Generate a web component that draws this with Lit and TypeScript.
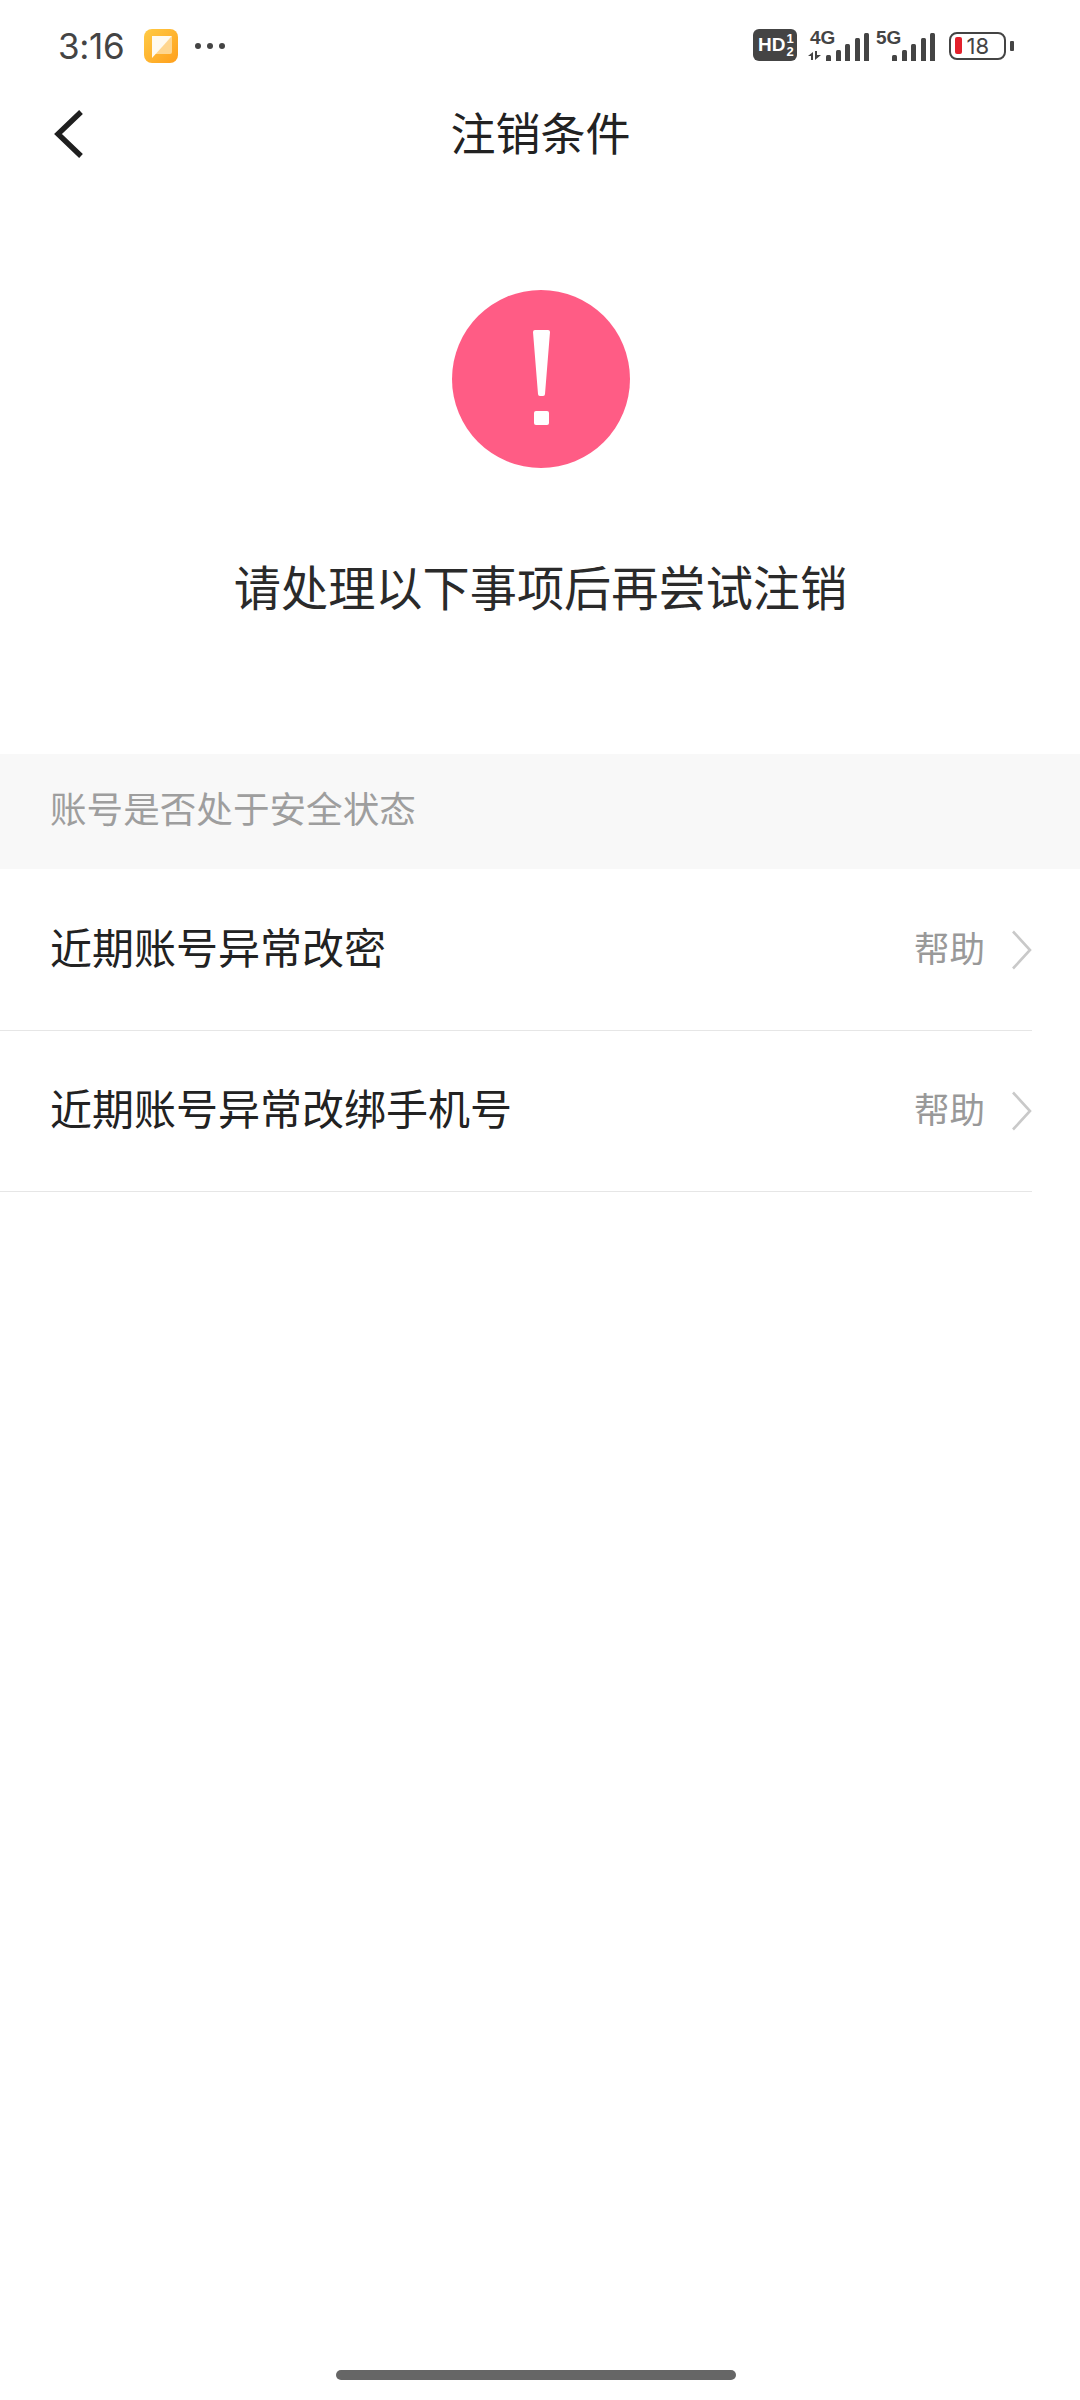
import { LitElement, html, css } from "lit";
import { customElement } from "lit/decorators.js";

const chevron = html`<svg class="chev" width="24" height="42" viewBox="0 0 24 42"><path d="M3 2.5 L20 21 L3 39.5" fill="none" stroke="#c9c9c9" stroke-width="2.6"/></svg>`;

const bars = (heights: number[]) => html`<div class="bars">${heights.map(
  (h) => html`<i class="bar" style="height:${h}px"></i>`
)}</div>`;

@customElement("app-root")
export class AppRoot extends LitElement {
  static styles = css`
    :host {
      display: flex;
      flex-direction: column;
      width: 1080px;
      height: 2400px;
      background: #fff;
      overflow: hidden;
      font-family: "Liberation Sans", "Noto Sans CJK SC", sans-serif;
      color: #222;
    }
    .status {
      height: 84px;
      flex: none;
      display: flex;
      align-items: center;
      padding: 7px 66px 0 58px;
      box-sizing: border-box;
      color: #444;
    }
    .time {
      font-family: Inter, "Noto Sans", sans-serif;
      font-size: 35px;
      line-height: 40px;
      width: 86px;
      letter-spacing: -0.3px;
    }
    .app {
      width: 34px;
      height: 34px;
      flex: none;
    }
    .dots {
      display: flex;
      gap: 6px;
      margin-left: 17px;
    }
    .dots i {
      width: 6px;
      height: 6px;
      border-radius: 50%;
      background: #444;
    }
    .right {
      margin-left: auto;
      display: flex;
      align-items: center;
    }
    .hd {
      width: 44px;
      height: 32px;
      border-radius: 6px;
      background: #444;
      color: #fff;
      font: 700 19px/32px "Liberation Sans", sans-serif;
      display: flex;
      align-items: center;
      padding-left: 5px;
      box-sizing: border-box;
      gap: 1px;
      margin-top: -2px;
    }
    .frac {
      display: flex;
      flex-direction: column;
      font-size: 13px;
      line-height: 13px;
      align-items: center;
    }
    .sig {
      position: relative;
      width: 61px;
      height: 30px;
      margin-left: 11px;
      display: flex;
      justify-content: flex-end;
      align-items: flex-end;
    }
    .sig.five {
      width: 59px;
      margin-left: 7px;
    }
    .net {
      position: absolute;
      left: 2px;
      top: 0;
      font: 700 19px/14px "Liberation Sans", sans-serif;
      color: #444;
    }
    .five .net {
      left: 0;
    }
    .updown {
      position: absolute;
      left: 0;
      bottom: 1px;
    }
    .bars {
      display: flex;
      align-items: flex-end;
      gap: 4.5px;
    }
    .bar {
      width: 5px;
      background: #444;
      border-radius: 1.5px 1.5px 0 0;
      display: block;
    }
    .battery {
      margin-left: 14px;
      width: 57px;
      height: 28px;
      border: 2.4px solid #444;
      border-radius: 8px;
      box-sizing: border-box;
      display: flex;
      align-items: center;
      padding-left: 3.6px;
    }
    .level {
      width: 7px;
      height: 17px;
      background: #e3202b;
      border-radius: 2px;
      flex: none;
    }
    .pct {
      font: 400 22px/24px Inter, "Liberation Sans", sans-serif;
      color: #444;
      margin-left: 5px;
    }
    .nub {
      width: 4px;
      height: 10px;
      margin-left: 4px;
      background: #444;
      border-radius: 1px;
    }
    .nav {
      flex: none;
      height: 104px;
      position: relative;
      display: flex;
      align-items: center;
      justify-content: center;
    }
    .nav svg {
      position: absolute;
      left: 52px;
      top: 24px;
    }
    .title {
      font-size: 45px;
      line-height: 60px;
      color: #222;
      margin-left: 1px;
    }
    .hero {
      flex: none;
      height: 566px;
      box-sizing: border-box;
      padding-top: 102px;
      display: flex;
      flex-direction: column;
      align-items: center;
    }
    .circle {
      width: 178px;
      height: 178px;
      display: block;
      flex: none;
      margin-left: 2px;
    }
    .msg {
      margin-top: 92px;
      font-size: 47.2px;
      line-height: 60px;
      color: #2a2a2a;
      margin-left: 1px;
      white-space: nowrap;
    }
    .section {
      flex: none;
      height: 115px;
      margin-bottom: 1px;
      box-sizing: border-box;
      background: #f8f8f8;
      padding: 0 0 8px 50px;
      display: flex;
      align-items: center;
      font-size: 36.6px;
      color: #9e9e9e;
    }
    .row {
      flex: none;
      height: 161px;
      box-sizing: border-box;
      margin-right: 48px;
      padding-left: 50px;
      border-bottom: 1.5px solid #e6e6e6;
      display: flex;
      align-items: center;
    }
    .label {
      font-size: 42px;
      line-height: 56px;
      color: #222;
      white-space: nowrap;
      flex: 1;
    }
    .help {
      font-size: 35.5px;
      color: #999;
      margin: 0 25px 7px 0;
    }
    .chev {
      margin-right: -2px;
      flex: none;
    }
    .spacer {
      flex: 1;
    }
    .home-wrap {
      flex: none;
      height: 30px;
      display: flex;
      justify-content: center;
    }
    .home {
      width: 400px;
      height: 10px;
      border-radius: 5px;
      background: #666;
      margin-left: -9px;
    }
  `;

  render() {
    return html`
      <div class="status">
        <div class="time">3:16</div>
        <svg class="app" viewBox="0 0 34 34">
          <defs>
            <linearGradient id="ag" x1="0" y1="0" x2="1" y2="1">
              <stop offset="0" stop-color="#ffcb45" />
              <stop offset="1" stop-color="#ff9f1c" />
            </linearGradient>
          </defs>
          <rect width="34" height="34" rx="8" fill="url(#ag)" />
          <path d="M28 7 V23 Q28 25 26 25 H10 Z" fill="#ffd68f" />
          <path d="M8 7 H28 L8 29 Z" fill="#fffaf0" />
        </svg>
        <div class="dots"><i></i><i></i><i></i></div>
        <div class="right">
          <div class="hd">
            <span>HD</span>
            <span class="frac"><span>1</span><span>2</span></span>
          </div>
          <div class="sig">
            <span class="net">4G</span>
            <svg class="updown" width="13" height="9" viewBox="0 0 13 9">
              <path d="M0 5 L5 1 V9 H3 V5 Z M7 0 H9 V4 H13 L7 9 Z" fill="#444" />
            </svg>
            ${bars([6, 11, 17, 23, 28])}
          </div>
          <div class="sig five">
            <span class="net">5G</span>
            ${bars([6, 11, 17, 23, 28])}
          </div>
          <div class="battery">
            <div class="level"></div>
            <div class="pct">18</div>
          </div>
          <div class="nub"></div>
        </div>
      </div>
      <div class="nav">
        <svg width="36" height="52" viewBox="0 0 36 52">
          <path d="M29 4 L6 26 L29 48" fill="none" stroke="#1f1f1f" stroke-width="5.4" />
        </svg>
        <div class="title">注销条件</div>
      </div>
      <div class="hero">
        <svg class="circle" viewBox="0 0 178 178">
          <circle cx="89" cy="89" r="89" fill="#ff5c85" />
          <path d="M81 42 Q81 40 83 40 H96 Q98 40 98 42 L93 104 Q93 106 91 106 H88 Q86 106 86 104 Z" fill="#fff" />
          <rect x="82" y="121" width="15" height="14" rx="2" fill="#fff" />
        </svg>
        <div class="msg">请处理以下事项后再尝试注销</div>
      </div>
      <div class="section">账号是否处于安全状态</div>
      <div class="row">
        <div class="label">近期账号异常改密</div>
        <div class="help">帮助</div>
        ${chevron}
      </div>
      <div class="row">
        <div class="label">近期账号异常改绑手机号</div>
        <div class="help">帮助</div>
        ${chevron}
      </div>
      <div class="spacer"></div>
      <div class="home-wrap"><div class="home"></div></div>
    `;
  }
}
